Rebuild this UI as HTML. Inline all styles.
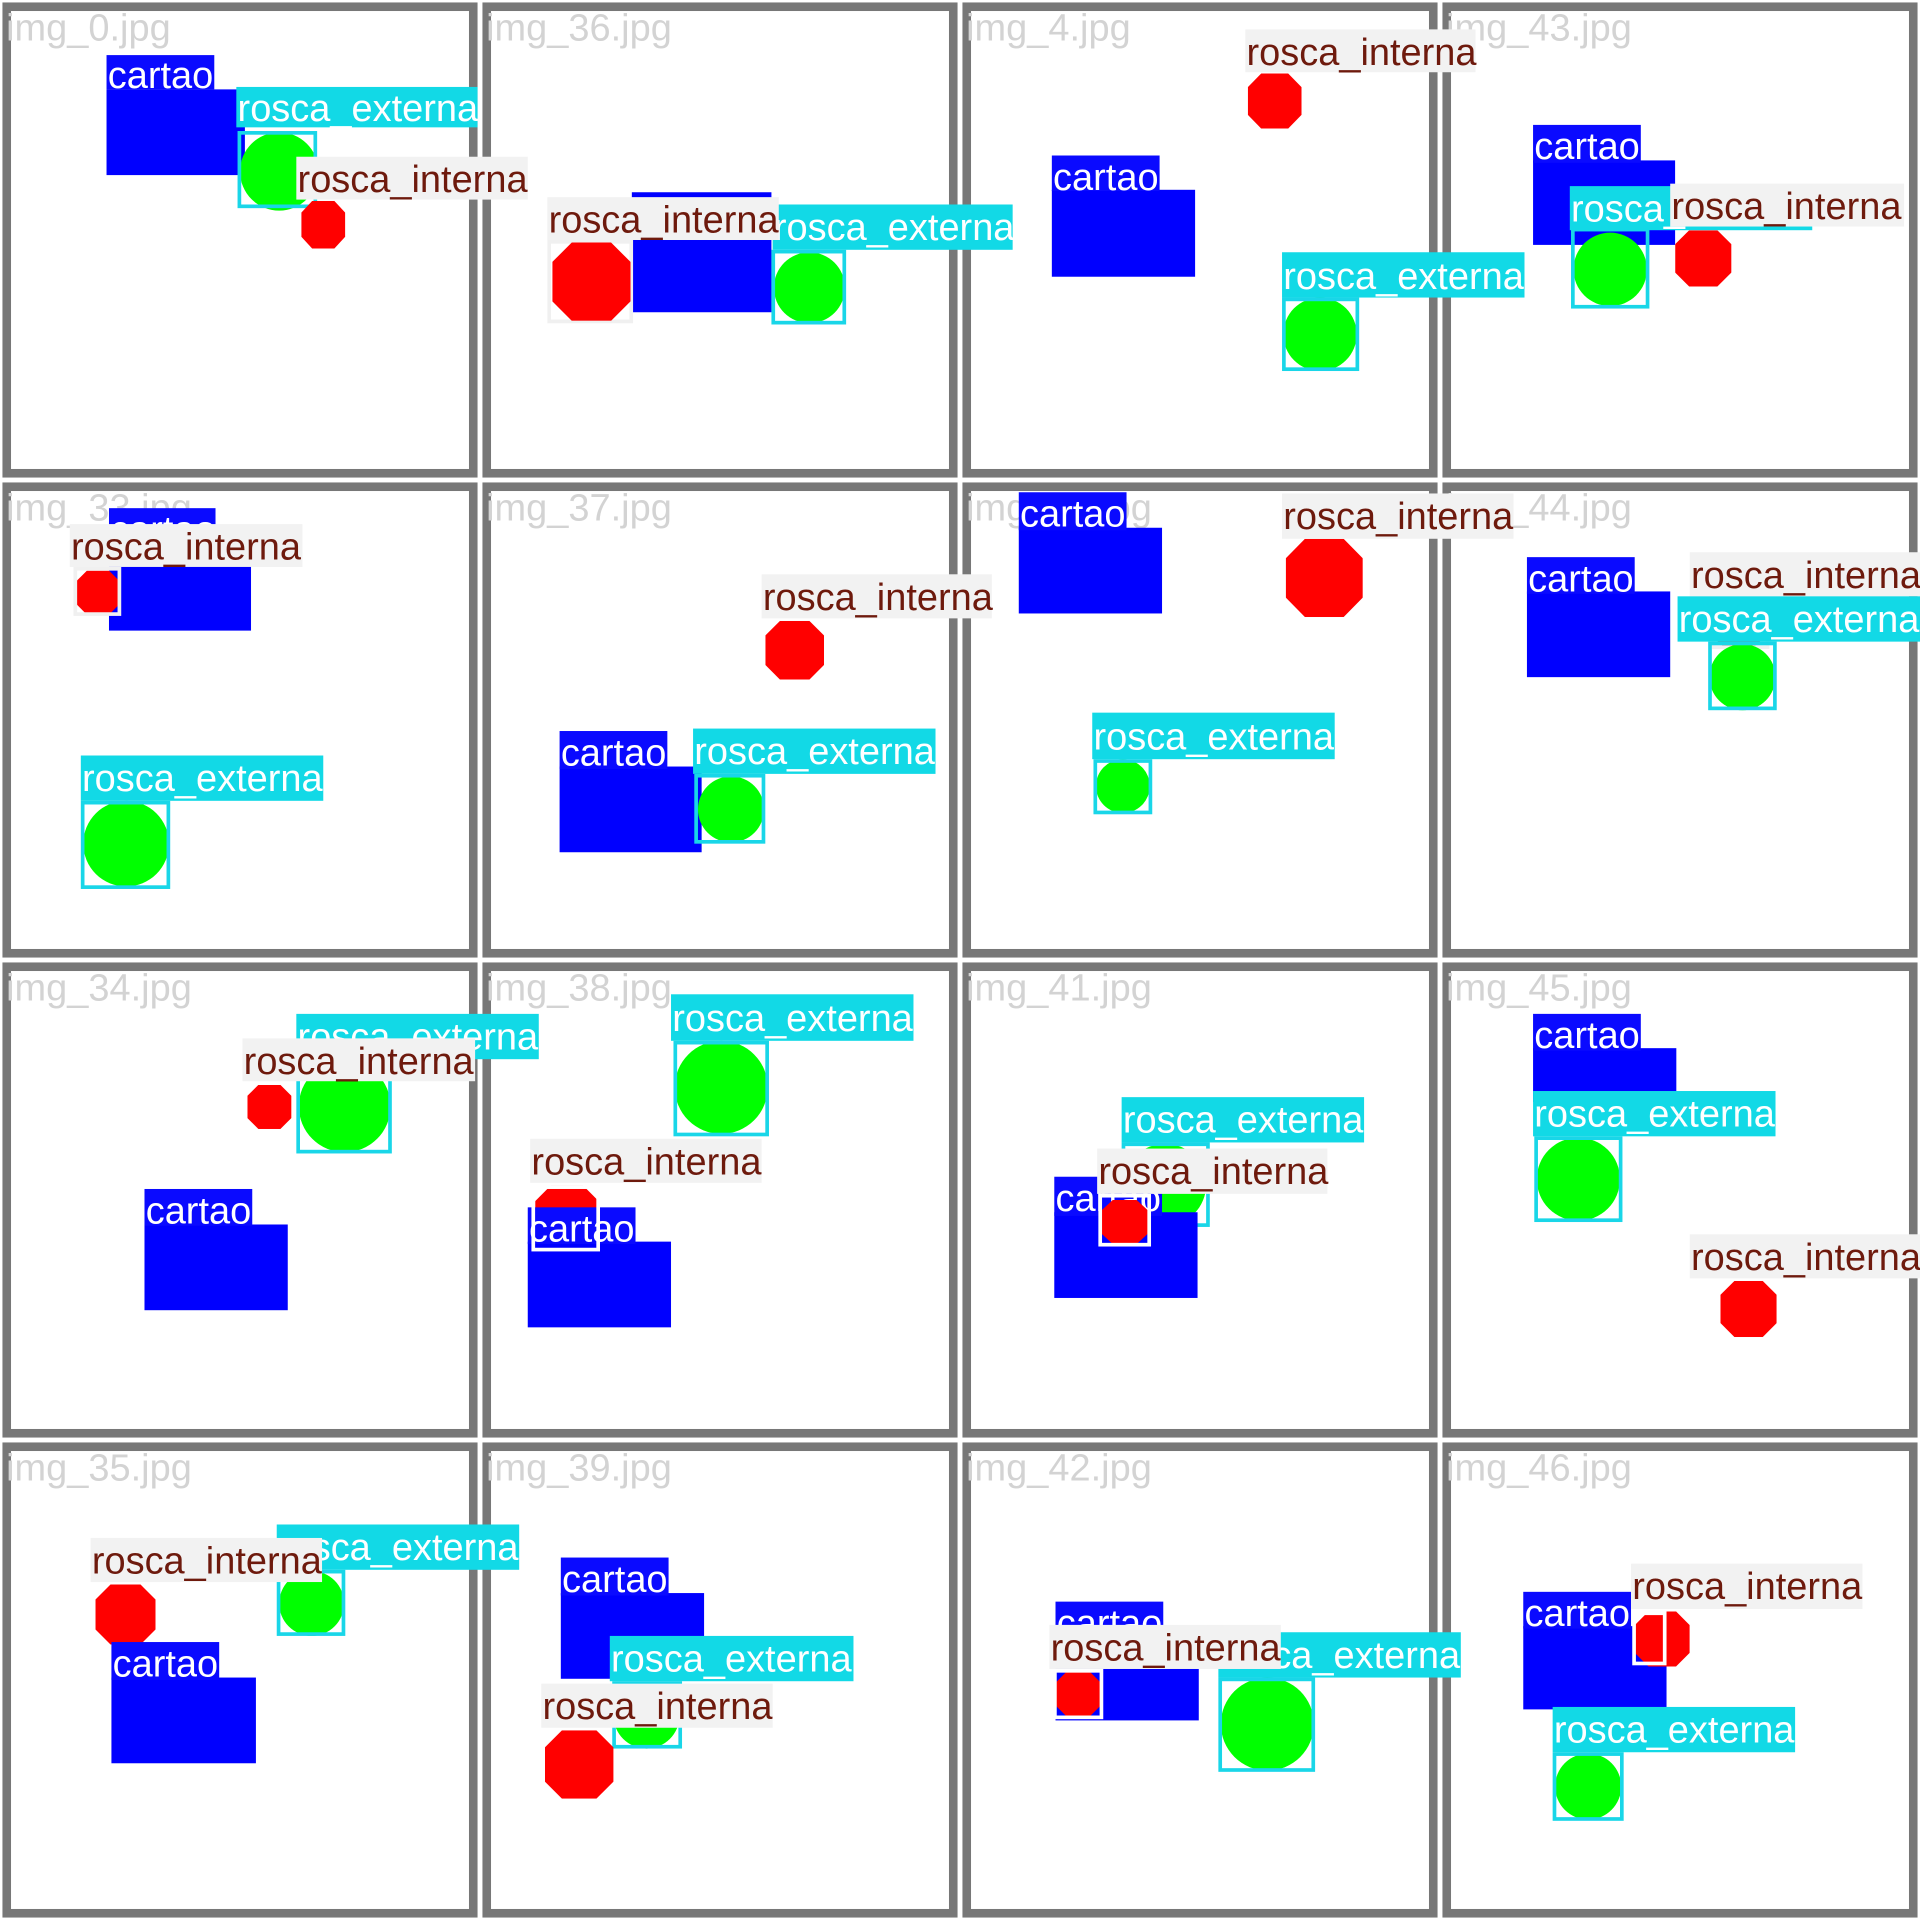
<!DOCTYPE html>
<html><head><meta charset="utf-8"><style>
html,body{margin:0;padding:0;background:#fff;width:1920px;height:1920px;overflow:hidden}
#w{position:absolute;left:0;top:0;width:1568px;height:1568px;transform:scale(1.22449);transform-origin:0 0;font-family:"Liberation Sans",Arial,sans-serif}
#w div{position:absolute;box-sizing:border-box}
.f{width:388.8px;height:388.8px;border:7.3px solid #777;background:#fff}
.t{font-size:31px;color:#d3d3d3;line-height:34px;white-space:nowrap}
.r{background:#0000ff}
.bb{border:3px solid #1e3cff}
.cb{border:3px solid #19d6e8}
.ib{border:3px solid #f0f0f0}
.c{background:#00ff00;border-radius:50%}
.o{background:#ff0000;clip-path:polygon(25% 0,75% 0,100% 25%,100% 75%,75% 100%,25% 100%,0 75%,0 25%)}
.L{font-size:31px;white-space:nowrap;padding-left:1px;overflow:visible}
.k{background:#0a0aff;color:#fff}
.e{background:#12d9e6;color:#fff}
.i{background:#f2f2f2;color:#6e1a0d}
</style></head><body><div id="w">
<div class="f" style="left:1.6px;top:1.6px"></div>
<div class="f" style="left:393.6px;top:1.6px"></div>
<div class="f" style="left:785.6px;top:1.6px"></div>
<div class="f" style="left:1177.6px;top:1.6px"></div>
<div class="f" style="left:1.6px;top:393.6px"></div>
<div class="f" style="left:393.6px;top:393.6px"></div>
<div class="f" style="left:785.6px;top:393.6px"></div>
<div class="f" style="left:1177.6px;top:393.6px"></div>
<div class="f" style="left:1.6px;top:785.6px"></div>
<div class="f" style="left:393.6px;top:785.6px"></div>
<div class="f" style="left:785.6px;top:785.6px"></div>
<div class="f" style="left:1177.6px;top:785.6px"></div>
<div class="f" style="left:1.6px;top:1177.6px"></div>
<div class="f" style="left:393.6px;top:1177.6px"></div>
<div class="f" style="left:785.6px;top:1177.6px"></div>
<div class="f" style="left:1177.6px;top:1177.6px"></div>
<div class="t" style="left:5px;top:6px">img_0.jpg</div>
<div class="t" style="left:397px;top:6px">img_36.jpg</div>
<div class="t" style="left:789px;top:6px">img_4.jpg</div>
<div class="t" style="left:1181px;top:6px">img_43.jpg</div>
<div class="t" style="left:5px;top:398px">img_33.jpg</div>
<div class="t" style="left:397px;top:398px">img_37.jpg</div>
<div class="t" style="left:789px;top:398px">img_40.jpg</div>
<div class="t" style="left:1181px;top:398px">img_44.jpg</div>
<div class="t" style="left:5px;top:790px">img_34.jpg</div>
<div class="t" style="left:397px;top:790px">img_38.jpg</div>
<div class="t" style="left:789px;top:790px">img_41.jpg</div>
<div class="t" style="left:1181px;top:790px">img_45.jpg</div>
<div class="t" style="left:5px;top:1182px">img_35.jpg</div>
<div class="t" style="left:397px;top:1182px">img_39.jpg</div>
<div class="t" style="left:789px;top:1182px">img_42.jpg</div>
<div class="t" style="left:1181px;top:1182px">img_46.jpg</div>

<div class="r" style="left:87px;top:73px;width:113px;height:70px"></div>
<div class="L k" style="left:87px;top:45px;width:88px;height:28px;line-height:34px">cartao</div>
<div class="c" style="left:196px;top:108px;width:64px;height:64px"></div>
<div class="cb" style="left:194px;top:107px;width:65px;height:63px"></div>
<div class="L e" style="left:193px;top:71px;width:197px;height:33px;line-height:35px">rosca_externa</div>
<div class="o" style="left:246px;top:164px;width:36px;height:39px"></div>
<div class="L i" style="left:242px;top:128px;width:189px;height:35px;line-height:37px">rosca_interna</div>

<div class="r" style="left:516px;top:157px;width:114px;height:98px"></div>
<div class="c" style="left:632px;top:206px;width:58px;height:58px"></div>
<div class="cb" style="left:630px;top:204px;width:61px;height:61px"></div>
<div class="L e" style="left:631px;top:167px;width:196px;height:37px;line-height:37px">rosca_externa</div>
<div class="ib" style="left:447px;top:196px;width:70px;height:68px"></div>
<div class="o" style="left:451px;top:198px;width:64px;height:64px"></div>
<div class="L i" style="left:447px;top:161px;width:189px;height:35px;line-height:37px">rosca_interna</div>

<div class="o" style="left:1019px;top:60px;width:44px;height:45px"></div>
<div class="L i" style="left:1017px;top:24px;width:188px;height:35px;line-height:37px">rosca_interna</div>
<div class="r" style="left:859px;top:155px;width:117px;height:71px"></div>
<div class="L k" style="left:859px;top:127px;width:88px;height:29px;line-height:35px">cartao</div>
<div class="c" style="left:1048px;top:243px;width:60px;height:60px"></div>
<div class="cb" style="left:1047px;top:243px;width:63px;height:60px"></div>
<div class="L e" style="left:1047px;top:206px;width:198px;height:37px;line-height:39px">rosca_externa</div>

<div class="r" style="left:1252px;top:131px;width:116px;height:69px"></div>
<div class="L k" style="left:1252px;top:102px;width:88px;height:31px;line-height:36px">cartao</div>
<div class="c" style="left:1285px;top:190px;width:60px;height:60px"></div>
<div class="cb" style="left:1283px;top:186px;width:64px;height:66px"></div>
<div class="L e" style="left:1282px;top:152px;width:198px;height:36px;line-height:38px">rosca_externa</div>
<div class="o" style="left:1368px;top:188px;width:46px;height:46px"></div>
<div class="L i" style="left:1364px;top:150px;width:191px;height:35px;line-height:37px">rosca_interna</div>

<div class="r" style="left:89px;top:445px;width:116px;height:70px"></div>
<div class="L k" style="left:89px;top:415px;width:87px;height:30px;line-height:36px">cartao</div>
<div class="o" style="left:62px;top:466px;width:36px;height:36px"></div>
<div class="ib" style="left:60px;top:463px;width:39px;height:40px"></div>
<div class="L i" style="left:57px;top:428px;width:190px;height:35px;line-height:37px">rosca_interna</div>
<div class="c" style="left:68px;top:654px;width:70px;height:70px"></div>
<div class="cb" style="left:66px;top:654px;width:73px;height:72px"></div>
<div class="L e" style="left:66px;top:617px;width:198px;height:37px;line-height:38px">rosca_externa</div>

<div class="o" style="left:625px;top:507px;width:48px;height:48px"></div>
<div class="L i" style="left:622px;top:469px;width:188px;height:36px;line-height:38px">rosca_interna</div>
<div class="r" style="left:457px;top:626px;width:116px;height:70px"></div>
<div class="L k" style="left:457px;top:597px;width:88px;height:31px;line-height:36px">cartao</div>
<div class="c" style="left:570px;top:634px;width:54px;height:54px"></div>
<div class="cb" style="left:567px;top:632px;width:58px;height:57px"></div>
<div class="L e" style="left:566px;top:595px;width:198px;height:37px;line-height:38px">rosca_externa</div>

<div class="r" style="left:832px;top:431px;width:117px;height:70px"></div>
<div class="L k" style="left:832px;top:402px;width:88px;height:31px;line-height:36px">cartao</div>
<div class="o" style="left:1050px;top:440px;width:63px;height:64px"></div>
<div class="L i" style="left:1047px;top:403px;width:189px;height:37px;line-height:38px">rosca_interna</div>
<div class="c" style="left:895px;top:620px;width:44px;height:44px"></div>
<div class="cb" style="left:893px;top:620px;width:48px;height:45px"></div>
<div class="L e" style="left:892px;top:582px;width:198px;height:38px;line-height:39px">rosca_externa</div>

<div class="r" style="left:1247px;top:483px;width:117px;height:70px"></div>
<div class="L k" style="left:1247px;top:455px;width:88px;height:30px;line-height:36px">cartao</div>
<div class="o" style="left:1400px;top:497px;width:40px;height:33px"></div>
<div class="ib" style="left:1398px;top:490px;width:47px;height:40px"></div>
<div class="L i" style="left:1380px;top:451px;width:188px;height:36px;line-height:38px">rosca_interna</div>
<div class="c" style="left:1396px;top:526px;width:54px;height:54px"></div>
<div class="cb" style="left:1395px;top:524px;width:56px;height:56px"></div>
<div class="L e" style="left:1370px;top:487px;width:198px;height:37px;line-height:38px">rosca_externa</div>

<div class="r" style="left:118px;top:1000px;width:117px;height:70px"></div>
<div class="L k" style="left:118px;top:971px;width:88px;height:30px;line-height:36px">cartao</div>
<div class="c" style="left:244px;top:866px;width:75px;height:75px"></div>
<div class="cb" style="left:242px;top:865px;width:78px;height:77px"></div>
<div class="L e" style="left:242px;top:828px;width:198px;height:37px;line-height:38px">rosca_externa</div>
<div class="o" style="left:202px;top:886px;width:36px;height:36px"></div>
<div class="L i" style="left:198px;top:848px;width:190px;height:35px;line-height:37px">rosca_interna</div>

<div class="c" style="left:551px;top:850px;width:76px;height:76px"></div>
<div class="cb" style="left:550px;top:850px;width:78px;height:78px"></div>
<div class="L e" style="left:548px;top:812px;width:198px;height:38px;line-height:39px">rosca_externa</div>
<div class="o" style="left:437px;top:968px;width:52px;height:52px"></div>
<div class="L i" style="left:433px;top:930px;width:189px;height:36px;line-height:38px">rosca_interna</div>
<div class="r" style="left:431px;top:1014px;width:117px;height:70px"></div>
<div class="L k" style="left:431px;top:986px;width:88px;height:30px;line-height:36px">cartao</div>
<div class="ib" style="left:434px;top:968px;width:56px;height:54px;border-color:#fff"></div>

<div class="c" style="left:918px;top:934px;width:67px;height:67px"></div>
<div class="cb" style="left:916px;top:933px;width:72px;height:69px"></div>
<div class="L e" style="left:916px;top:896px;width:198px;height:37px;line-height:38px">rosca_externa</div>
<div class="r" style="left:861px;top:990px;width:117px;height:70px"></div>
<div class="L k" style="left:861px;top:961px;width:88px;height:32px;line-height:36px">cartao</div>
<div class="o" style="left:899px;top:980px;width:39px;height:36px"></div>
<div class="ib" style="left:897px;top:975px;width:43px;height:43px;border-color:#fff"></div>
<div class="L i" style="left:896px;top:938px;width:188px;height:37px;line-height:38px">rosca_interna</div>

<div class="r" style="left:1252px;top:856px;width:117px;height:44px"></div>
<div class="L k" style="left:1252px;top:828px;width:88px;height:30px;line-height:36px">cartao</div>
<div class="c" style="left:1255px;top:929px;width:68px;height:68px"></div>
<div class="cb" style="left:1253px;top:928px;width:72px;height:70px"></div>
<div class="L e" style="left:1252px;top:891px;width:198px;height:37px;line-height:38px">rosca_externa</div>
<div class="o" style="left:1405px;top:1046px;width:46px;height:46px"></div>
<div class="L i" style="left:1380px;top:1008px;width:188px;height:36px;line-height:38px">rosca_interna</div>

<div class="c" style="left:228px;top:1283px;width:53px;height:53px"></div>
<div class="cb" style="left:226px;top:1282px;width:56px;height:54px"></div>
<div class="L e" style="left:226px;top:1245px;width:198px;height:37px;line-height:38px">rosca_externa</div>
<div class="o" style="left:78px;top:1294px;width:49px;height:49px"></div>
<div class="L i" style="left:74px;top:1256px;width:189px;height:36px;line-height:38px">rosca_interna</div>
<div class="r" style="left:91px;top:1370px;width:118px;height:70px"></div>
<div class="L k" style="left:91px;top:1341px;width:88px;height:31px;line-height:36px">cartao</div>

<div class="r" style="left:458px;top:1301px;width:117px;height:70px"></div>
<div class="L k" style="left:458px;top:1272px;width:88px;height:31px;line-height:36px">cartao</div>
<div class="c" style="left:501px;top:1374px;width:54px;height:54px"></div>
<div class="cb" style="left:500px;top:1373px;width:57px;height:55px"></div>
<div class="L e" style="left:498px;top:1336px;width:199px;height:37px;line-height:38px">rosca_externa</div>
<div class="o" style="left:445px;top:1413px;width:56px;height:56px"></div>
<div class="L i" style="left:442px;top:1375px;width:189px;height:36px;line-height:38px">rosca_interna</div>

<div class="r" style="left:862px;top:1335px;width:117px;height:70px"></div>
<div class="L k" style="left:862px;top:1308px;width:88px;height:29px;line-height:36px">cartao</div>
<div class="c" style="left:997px;top:1370px;width:76px;height:76px"></div>
<div class="cb" style="left:995px;top:1370px;width:79px;height:77px"></div>
<div class="L e" style="left:995px;top:1333px;width:198px;height:37px;line-height:38px">rosca_externa</div>
<div class="o" style="left:862px;top:1365px;width:37px;height:37px"></div>
<div class="ib" style="left:860px;top:1363px;width:41px;height:41px;border-color:#fff"></div>
<div class="L i" style="left:857px;top:1327px;width:189px;height:36px;line-height:38px">rosca_interna</div>

<div class="r" style="left:1244px;top:1328px;width:117px;height:68px"></div>
<div class="L k" style="left:1244px;top:1300px;width:88px;height:30px;line-height:36px">cartao</div>
<div class="o" style="left:1335px;top:1316px;width:45px;height:45px"></div>
<div class="ib" style="left:1333px;top:1316px;width:28px;height:44px;border-color:#fff"></div>
<div class="L i" style="left:1332px;top:1277px;width:189px;height:37px;line-height:38px">rosca_interna</div>
<div class="c" style="left:1270px;top:1432px;width:54px;height:54px"></div>
<div class="cb" style="left:1268px;top:1431px;width:58px;height:56px"></div>
<div class="L e" style="left:1268px;top:1394px;width:198px;height:37px;line-height:38px">rosca_externa</div>
</div></body></html>
